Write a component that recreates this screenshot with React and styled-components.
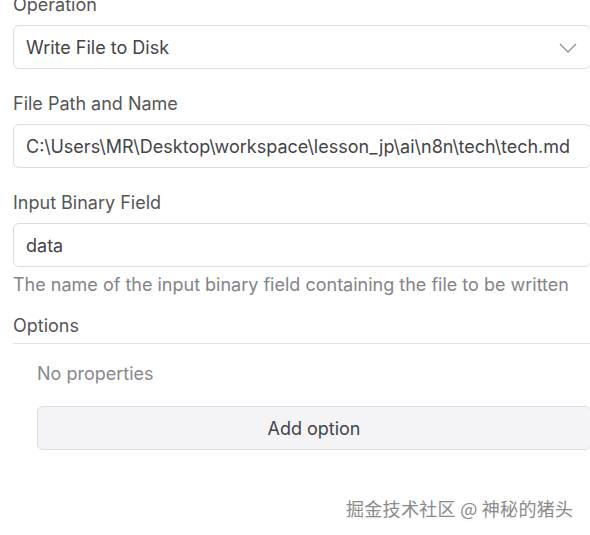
import React from "react";
import styled, { createGlobalStyle } from "styled-components";

const Global = createGlobalStyle`
  html, body { margin: 0; padding: 0; background: #ffffff; overflow: hidden; }
  body { width: 590px; height: 535px; position: relative; font-family: Inter, "Open Sans", sans-serif; }
`;

const Panel = styled.div`
  width: 578px;
  padding-left: 13px;
  margin-top: -6px;
  display: flex;
  flex-direction: column;
`;

const Field = styled.div`
  display: flex;
  flex-direction: column;
  margin-bottom: ${(p) => p.$mb ?? 24}px;
`;

const Label = styled.div`
  font-size: 18px;
  line-height: 22px;
  color: #555558;
  margin-bottom: 9px;
`;

const InputBox = styled.div`
  box-sizing: border-box;
  height: 44px;
  border: 1px solid #dcdde3;
  border-radius: 6px;
  padding: 1px 12px 0;
  display: flex;
  align-items: center;
  justify-content: space-between;
  font-size: 18px;
  color: #444448;
  white-space: nowrap;
`;

const Chevron = styled.svg`
  width: 18px;
  height: 10px;
  margin-right: 1px;
`;

const Hint = styled.div`
  font-size: 18px;
  line-height: 22px;
  color: #838389;
  margin-top: 7px;
`;

const SectionHeader = styled.div`
  font-size: 18px;
  line-height: 22px;
  color: #555558;
  padding-bottom: 6px;
  border-bottom: 1px solid #e2e3e8;
`;

const SectionBody = styled.div`
  padding-left: 24px;
  display: flex;
  flex-direction: column;
`;

const Empty = styled.div`
  font-size: 18px;
  line-height: 22px;
  color: #88888d;
  margin-top: 19px;
`;

const AddButton = styled.button`
  margin-top: 21px;
  box-sizing: border-box;
  height: 44px;
  width: 100%;
  border: 1px solid #dcdde3;
  border-radius: 6px;
  background: #f4f4f7;
  font-family: Inter, "Open Sans", sans-serif;
  font-size: 18px;
  color: #444448;
  cursor: pointer;
`;

const Watermark = styled.div`
  position: absolute;
  left: 346px;
  top: 496px;
  font-family: "Noto Sans CJK SC", sans-serif;
  font-size: 18px;
  line-height: 24px;
  letter-spacing: 0.3px;
  color: #8a8a8a;
  text-shadow: 1px 1px 0 #ffffff, -1px -1px 0 #ffffff, 1px -1px 0 #ffffff, -1px 1px 0 #ffffff, 0 1px 1px #bbbbbb;
  white-space: nowrap;
`;

export default function App() {
  return (
    <>
      <Global />
      <Panel>
        <Field>
          <Label>Operation</Label>
          <InputBox>
            <span>Write File to Disk</span>
            <Chevron viewBox="0 0 18 10">
              <path d="M1 1 L9 9 L17 1" fill="none" stroke="#909096" strokeWidth="1.3" />
            </Chevron>
          </InputBox>
        </Field>
        <Field>
          <Label>File Path and Name</Label>
          <InputBox>
            <span>C:\Users\MR\Desktop\workspace\lesson_jp\ai\n8n\tech\tech.md</span>
          </InputBox>
        </Field>
        <Field $mb={19}>
          <Label>Input Binary Field</Label>
          <InputBox>
            <span>data</span>
          </InputBox>
          <Hint>The name of the input binary field containing the file to be written</Hint>
        </Field>
        <SectionHeader>Options</SectionHeader>
        <SectionBody>
          <Empty>No properties</Empty>
          <AddButton>Add option</AddButton>
        </SectionBody>
      </Panel>
      <Watermark>掘金技术社区 @ 神秘的猪头</Watermark>
    </>
  );
}
